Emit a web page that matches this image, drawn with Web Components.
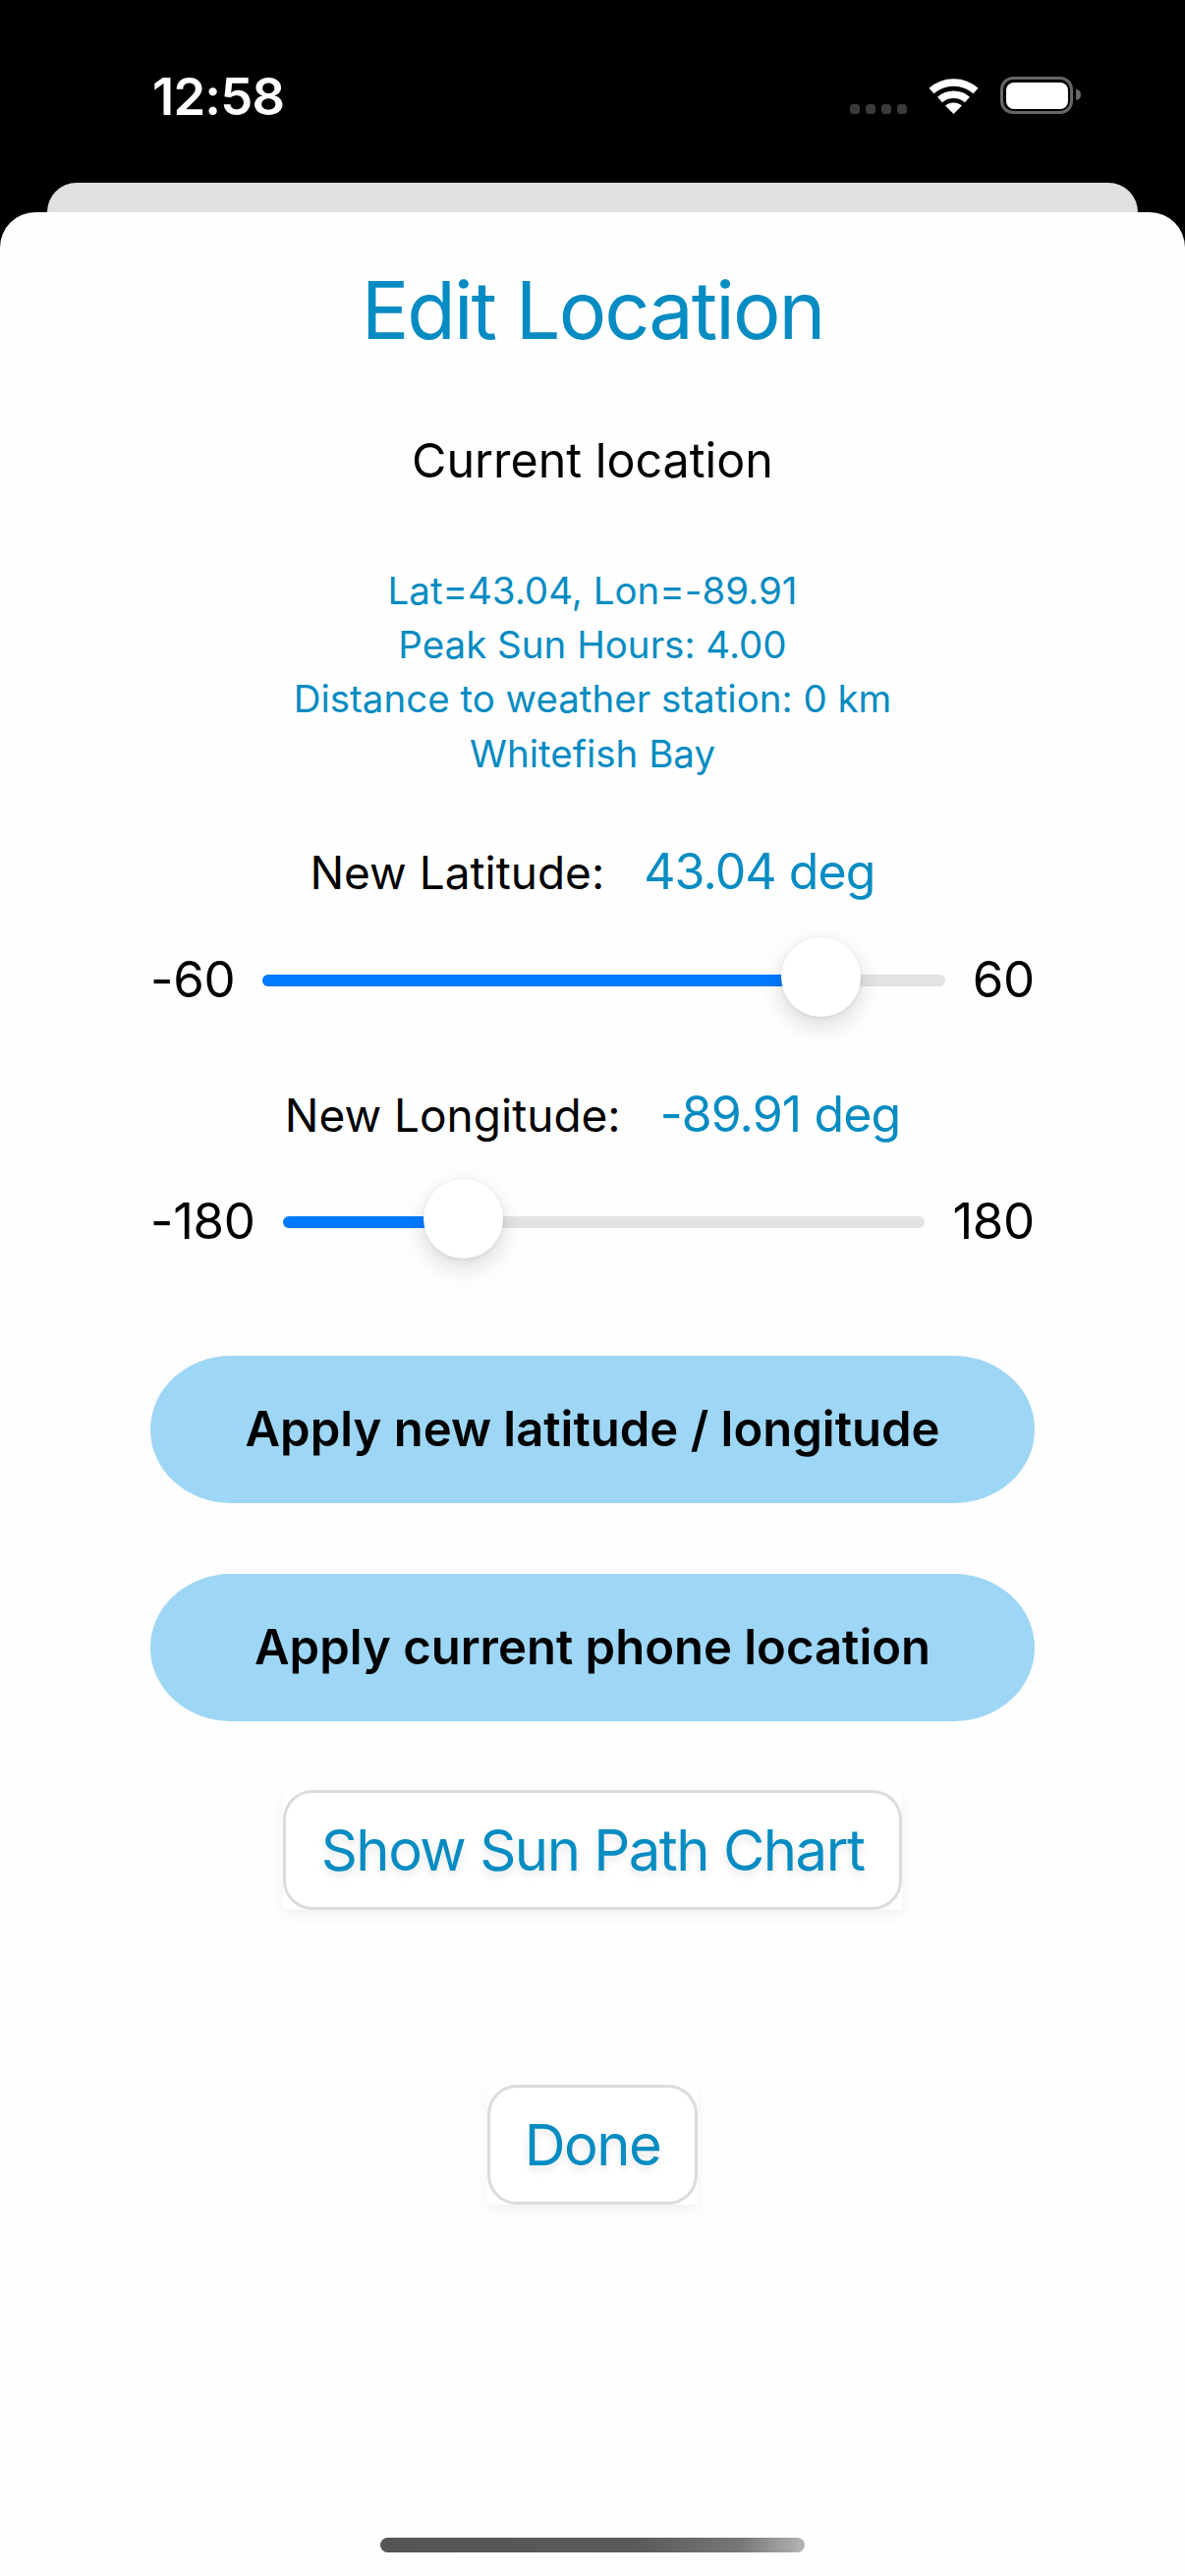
<!DOCTYPE html>
<html>
<head>
<meta charset="utf-8">
<title>Edit Location</title>
<style>
  html, body { margin: 0; padding: 0; background: #000; }
  body { width: 1206px; height: 2622px; overflow: hidden; font-family: Inter, "Noto Sans", sans-serif; }
  edit-location-page { height: 100%; }
</style>
</head>
<body>
<edit-location-page></edit-location-page>

<script>
(function() {
  const BLUE_TEXT = '#068cc2';

  // Phone status bar
  class StatusBar extends HTMLElement {
    constructor() {
      super();
      this.attachShadow({ mode: 'open' });
    }

    connectedCallback() {
      this.shadowRoot.innerHTML = `
        <style>
          :host { display: block; height: 186px; background: #000; color: #fff; flex-shrink: 0; }
          .bar { display: flex; align-items: flex-start; padding: 0 114px 0 155px; height: 100%; }
          .time { font-size: 52.5px; font-weight: 600; line-height: 60px; margin-top: 68px; letter-spacing: -0.8px; }
          .right { margin-left: auto; display: flex; align-items: flex-start; margin-top: 78px; }
          .dots { display: flex; gap: 6px; margin-top: 28px; margin-right: 22px; }
          .dots i { width: 10px; height: 10px; border-radius: 3.5px; background: #3a3a3a; display: block; }
          svg { display: block; margin-right: 22px; margin-top: 1px; }
          .battery { width: 74px; height: 38px; box-sizing: border-box; border: 3.5px solid #666; border-radius: 13px; padding: 2.5px; position: relative; }
          .battery b { display: block; height: 100%; background: #fff; border-radius: 8px; }
          .battery::after { content: ''; position: absolute; right: -11px; top: 10px; width: 5px; height: 11px; background: #666; border-radius: 0 6px 6px 0; }
        </style>
        <div class="bar">
          <div class="time">12:58</div>
          <div class="right">
            <div class="dots"><i></i><i></i><i></i><i></i></div>
            <svg width="51" height="37" viewBox="0 0 51 37" fill="none">
              <path d="M3 13.5C15.5 2 35.5 2 48 13.5" stroke="#fff" stroke-width="7.5"/>
              <path d="M11.5 22.5C19.5 15.5 31.5 15.5 39.5 22.5" stroke="#fff" stroke-width="7.5"/>
              <path d="M25.5 37L17 28.5C22 24.5 29 24.5 34 28.5Z" fill="#fff"/>
            </svg>
            <div class="battery"><b></b></div>
          </div>
        </div>
      `;
    }
  }

  // Read-only location summary, one line per slotted element
  class LocationInfo extends HTMLElement {
    constructor() {
      super();
      this.attachShadow({ mode: 'open' });
      this.shadowRoot.innerHTML = `
        <style>
          :host { display: block; text-align: center; color: ${BLUE_TEXT}; font-size: 38.5px; line-height: 55.2px; }
        </style>
        <slot></slot>
      `;
    }
  }

  // "New Latitude:   43.04 deg"
  class ValueRow extends HTMLElement {
    constructor() {
      super();
      this.attachShadow({ mode: 'open' });
    }

    connectedCallback() {
      this.shadowRoot.innerHTML = `
        <style>
          :host { display: flex; justify-content: center; align-items: baseline; gap: 40px; height: 60px; line-height: 60px; }
          .label { font-size: 46px; color: #000; }
          .value { font-size: 50px; letter-spacing: -0.9px; color: ${BLUE_TEXT}; }
        </style>
        <span class="label">${this.getAttribute('label')}</span>
        <span class="value">${this.getAttribute('value')}</span>
      `;
    }
  }

  // Native looking slider, thumb travels inside the track
  class RangeSlider extends HTMLElement {
    constructor() {
      super();
      this.attachShadow({ mode: 'open' });
    }

    connectedCallback() {
      const min = Number(this.getAttribute('min'));
      const max = Number(this.getAttribute('max'));
      const value = Number(this.getAttribute('value'));
      const ratio = (value - min) / (max - min);
      const center = `calc((100% - 80px) * ${ratio} + 40px)`;

      this.shadowRoot.innerHTML = `
        <style>
          :host { display: flex; align-items: center; gap: 28px; height: 82px; font-size: 51px; letter-spacing: -0.3px; color: #000; }
          .track { flex: 1; height: 12px; margin-top: 2px; border-radius: 6px; background: #e3e3e6; position: relative; }
          .fill { height: 100%; width: ${center}; background: #007aff; border-radius: 6px 0 0 6px; }
          .thumb {
            position: absolute; top: -38px; left: ${center}; width: 81px; height: 81px; margin-left: -40px;
            border-radius: 50%; background: #fff;
            box-shadow: 0 9px 24px rgba(0, 0, 0, 0.15), 0 1px 4px rgba(0, 0, 0, 0.08);
          }
        </style>
        <span>${min}</span>
        <div class="track"><div class="fill"></div><div class="thumb"></div></div>
        <span>${max}</span>
      `;
    }
  }

  class PillButton extends HTMLElement {
    constructor() {
      super();
      this.attachShadow({ mode: 'open' });
      this.shadowRoot.innerHTML = `
        <style>
          :host { display: block; }
          button {
            display: block; width: 900px; height: 150px; margin: 0 auto; padding: 0; border: none;
            border-radius: 82px / 75px; background: #9ed6f5; color: #000;
            font: 600 49px Inter, sans-serif;
          }
        </style>
        <button><slot></slot></button>
      `;
    }
  }

  class OutlineButton extends HTMLElement {
    constructor() {
      super();
      this.attachShadow({ mode: 'open' });
      this.shadowRoot.innerHTML = `
        <style>
          :host { display: block; width: max-content; margin: 0 auto; background: #fff; box-shadow: 0 6px 14px rgba(0, 0, 0, 0.05); }
          button {
            display: block; height: 122px; padding: 0 var(--pad, 36px); box-sizing: border-box;
            border: 3px solid #dcdcdc; border-radius: 30px; background: #fff; color: ${BLUE_TEXT};
            font: 400 58px Inter, sans-serif; letter-spacing: -1.5px; text-shadow: 0 5px 8px rgba(0, 0, 0, 0.1);
          }
        </style>
        <button><slot></slot></button>
      `;
    }
  }

  class HomeIndicator extends HTMLElement {
    constructor() {
      super();
      this.attachShadow({ mode: 'open' });
      this.shadowRoot.innerHTML = `
        <style>
          :host { display: block; width: 432px; height: 15px; margin: 0 auto; border-radius: 8px; background: linear-gradient(90deg, #555 0%, #5a5a5a 60%, #777 85%, #b5b5b5 100%); }
        </style>
      `;
    }
  }

  // Whole screen: status bar, card peeking behind, white sheet
  class EditLocationPage extends HTMLElement {
    constructor() {
      super();
      this.attachShadow({ mode: 'open' });
    }

    connectedCallback() {
      this.shadowRoot.innerHTML = `
        <style>
          :host { display: flex; flex-direction: column; height: 100%; background: #000; }
          .peek { height: 30px; margin: 0 48px; background: #e0e0e0; border-radius: 30px 30px 0 0; flex-shrink: 0; }
          .sheet { flex: 1; background: #fefefe; border-radius: 36px 36px 0 0; display: flex; flex-direction: column; }
          h1 { margin: 50px 0 0; height: 100px; line-height: 100px; font-size: 81px; font-weight: 400; text-align: center; color: ${BLUE_TEXT}; letter-spacing: -2px; }
          .current { margin-top: 73px; height: 60px; line-height: 60px; font-size: 48.4px; text-align: center; color: #000; }
          location-info { margin-top: 75px; }
          .controls { padding: 0 153px; }
          value-row.lat { margin-top: 62px; }
          range-slider.lat { margin-top: 39px; }
          value-row.lon { margin-top: 66px; }
          range-slider.lon { margin-top: 38px; }
          pill-button.first { margin-top: 96px; }
          pill-button.second { margin-top: 72px; }
          outline-button.chart { margin-top: 70px; }
          outline-button.done { margin-top: 178px; --pad: 35px; }
          home-indicator { margin-top: auto; margin-bottom: 24px; }
        </style>
        <status-bar></status-bar>
        <div class="peek"></div>
        <div class="sheet">
          <h1>Edit Location</h1>
          <div class="current">Current location</div>
          <location-info>
            <div>Lat=43.04, Lon=-89.91</div>
            <div>Peak Sun Hours: 4.00</div>
            <div>Distance to weather station: 0 km</div>
            <div>Whitefish Bay</div>
          </location-info>
          <div class="controls">
            <value-row class="lat" label="New Latitude:" value="43.04 deg"></value-row>
            <range-slider class="lat" min="-60" max="60" value="43.04"></range-slider>
            <value-row class="lon" label="New Longitude:" value="-89.91 deg"></value-row>
            <range-slider class="lon" min="-180" max="180" value="-89.91"></range-slider>
          </div>
          <pill-button class="first">Apply new latitude / longitude</pill-button>
          <pill-button class="second">Apply current phone location</pill-button>
          <outline-button class="chart">Show Sun Path Chart</outline-button>
          <outline-button class="done">Done</outline-button>
          <home-indicator></home-indicator>
        </div>
      `;
    }
  }

  customElements.define('status-bar', StatusBar);
  customElements.define('location-info', LocationInfo);
  customElements.define('value-row', ValueRow);
  customElements.define('range-slider', RangeSlider);
  customElements.define('pill-button', PillButton);
  customElements.define('outline-button', OutlineButton);
  customElements.define('home-indicator', HomeIndicator);
  customElements.define('edit-location-page', EditLocationPage);
})();
</script>
</body>
</html>
